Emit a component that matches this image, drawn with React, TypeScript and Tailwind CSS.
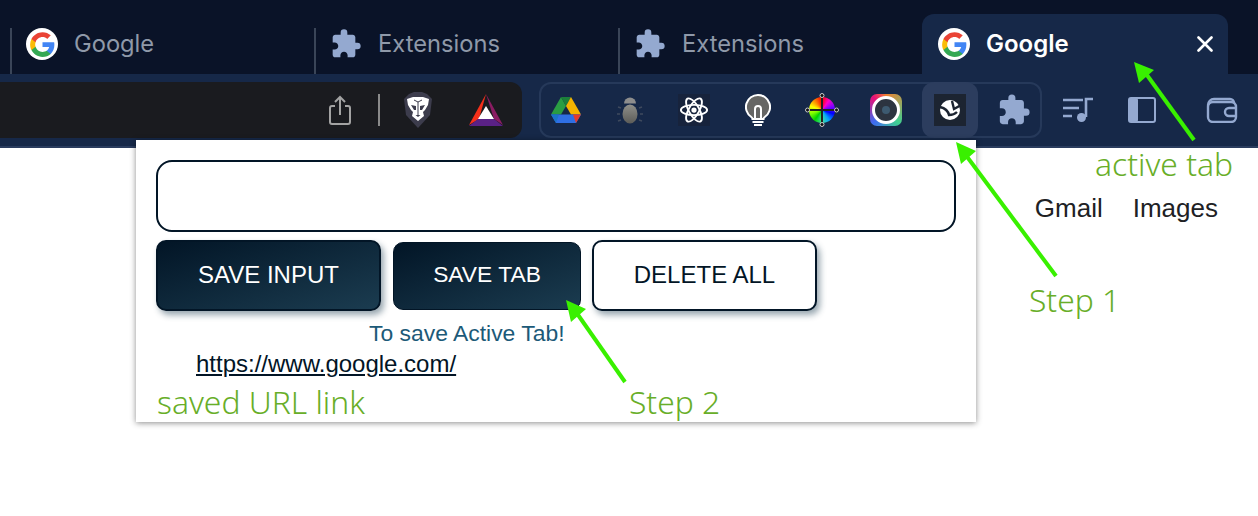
import { MdExtension } from 'react-icons/md';

function GoogleIcon() {
  return (
    <div className="flex h-8 w-8 items-center justify-center rounded-full bg-white">
      <svg viewBox="0 0 24 24" className="h-[27px] w-[27px]">
        <path fill="#4285F4" d="M22.56 12.25c0-.78-.07-1.53-.2-2.25H12v4.26h5.92c-.26 1.37-1.04 2.53-2.21 3.31v2.77h3.57c2.08-1.92 3.28-4.74 3.28-8.09z" />
        <path fill="#34A853" d="M12 23c2.97 0 5.46-.98 7.28-2.66l-3.57-2.77c-.98.66-2.23 1.06-3.71 1.06-2.86 0-5.29-1.93-6.16-4.53H2.18v2.84C3.99 20.53 7.7 23 12 23z" />
        <path fill="#FBBC05" d="M5.84 14.09c-.22-.66-.35-1.36-.35-2.09s.13-1.43.35-2.09V7.07H2.18C1.43 8.55 1 10.22 1 12s.43 3.45 1.18 4.93l3.66-2.84z" />
        <path fill="#EA4335" d="M12 5.38c1.62 0 3.06.56 4.21 1.64l3.15-3.15C17.45 2.09 14.97 1 12 1 7.7 1 3.99 3.47 2.18 7.07l3.66 2.84c.87-2.6 3.3-4.53 6.16-4.53z" />
      </svg>
    </div>
  );
}

function Puzzle() {
  return <MdExtension className="h-[34px] w-[34px] text-[#94a9d0]" />;
}

function InactiveTab({ title, icon }: { title: string; icon: React.ReactNode }) {
  return (
    <div className="flex h-[46px] w-[304px] items-center border-l-2 border-[#3a4558] pb-[14px] pl-[14px]">
      <div className="flex w-8 justify-center">{icon}</div>
      <span className="ml-[16px] text-[23.7px] text-[#8f99a9]">{title}</span>
    </div>
  );
}

function Slot({ children }: { children: React.ReactNode }) {
  return <div className="flex h-14 w-16 items-center justify-center">{children}</div>;
}

function Toolbar() {
  return (
    <div className="flex h-[74px] items-start border-b-[2px] border-[#2a3c5e] bg-[#162848] pt-2">
      <div className="flex h-14 w-[522px] items-center justify-end rounded-r-xl bg-[#1a1b1f]">
        <svg viewBox="0 0 24 32" className="h-8 w-6 text-[#a3a3a3]" fill="none" stroke="currentColor" strokeWidth="2">
          <path d="M7 12H4a2 2 0 0 0-2 2v14a2 2 0 0 0 2 2h16a2 2 0 0 0 2-2V14a2 2 0 0 0-2-2h-3" />
          <path d="M12 21V3M7 8l5-5 5 5" />
        </svg>
        <div className="ml-[26px] h-8 w-[2px] bg-[#8a8a8a]" />
        <svg viewBox="0 0 30 36" className="ml-[23px] h-9 w-[30px]">
          <path fill="#3c3c4c" d="M6 2l5-2h8l5 2 5 5-2 16-12 13L3 23 1 7z" />
          <path fill="#fff" d="M4 7l6-2h10l6 2-1 6-3 5-2 2 1 4-6 5-6-5 1-4-2-2-3-5z" />
          <path fill="#3c3c4c" d="M8 13l5 1 0 4-2 0zM22 13l-5 1 0 4 2 0zM12.5 23h5l-2.5 2z" />
          <path fill="none" stroke="#3c3c4c" strokeWidth="1" d="M15 10v13M11 8l4 2 4-2" />
        </svg>
        <svg viewBox="0 0 36 34" className="ml-[35px] mr-[18px] h-[34px] w-9">
          <path fill="#f5301a" d="M18 1L1 32l10-6z" />
          <path fill="#8a1c63" d="M18 1l17 31-9-6z" />
          <path fill="#5a2186" d="M1 33h34l-9-7H10z" />
          <path fill="#fff" d="M18 13l8 13H10z" />
        </svg>
      </div>
      <div className="ml-[17px] flex h-14 w-[503px] items-center rounded-xl border-2 border-[#26395a]">
        <div className="-ml-[7px] flex shrink-0 items-center">
          <Slot>
            <svg viewBox="0 0 30 26" className="h-[26px] w-[30px]">
              <path fill="#2a9d43" d="M10 0l5 9-5 8.5H0z" />
              <path fill="#1b7f3a" d="M10 0h10l-5 9z" />
              <path fill="#f4b400" d="M20 0l10 17.5H20L15 9z" />
              <path fill="#2f6fe4" d="M0 17.5h30L25 26H5z" />
              <path fill="#e53b2c" d="M30 17.5h-8l3 8.5z" />
              <path fill="#1a73c8" d="M0 17.5h8L5 26z" />
            </svg>
          </Slot>
          <Slot>
            <svg viewBox="0 0 28 27" className="h-[27px] w-7">
              <defs>
                <linearGradient id="bug" x1="0" y1="0" x2="0" y2="1">
                  <stop offset="0" stopColor="#8f8f8a" />
                  <stop offset="1" stopColor="#5c5c58" />
                </linearGradient>
              </defs>
              <path fill="#8d8d8d" d="M8 6.5a6 6 0 0 1 12 0z" />
              <ellipse cx="14" cy="17" rx="7.5" ry="9.5" fill="url(#bug)" />
              <path stroke="#3f4a5e" strokeWidth="1.5" fill="none" d="M5 11l-3-1M4 17H1M5 23l-3 1M23 11l3-1M24 17h3M23 23l3 1" />
            </svg>
          </Slot>
          <Slot>
            <div className="flex h-8 w-8 items-center justify-center bg-[#17233c]">
              <svg viewBox="-16 -16 32 32" className="h-[30px] w-[30px]" fill="none" stroke="#fff" strokeWidth="2">
                <ellipse rx="14" ry="5.5" />
                <ellipse rx="14" ry="5.5" transform="rotate(60)" />
                <ellipse rx="14" ry="5.5" transform="rotate(120)" />
                <circle r="2.8" fill="#fff" stroke="none" />
              </svg>
            </div>
          </Slot>
          <Slot>
            <svg viewBox="0 0 26 32" className="h-8 w-[26px]">
              <path fill="#666664" stroke="#fff" strokeWidth="2" d="M13 1a12 12 0 0 0-7 21.8c.8.6 1.5 1.2 1.5 2.2h11c0-1 .7-1.6 1.5-2.2A12 12 0 0 0 13 1z" />
              <path fill="none" stroke="#fff" strokeWidth="2" d="M10 24v-9a3 3 0 0 1 6 0v9" />
              <path fill="none" stroke="#fff" strokeWidth="2" d="M7 25h12M7.5 28h11M9 31h8" />
            </svg>
          </Slot>
          <Slot>
            <div className="relative h-[26px] w-[26px] rounded-full bg-[conic-gradient(#ff0000,#ff00c8,#8000ff,#0000ff,#00a0ff,#40e0a0,#00d000,#80ff00,#ffff00,#ff8000,#ff0000)]">
              <div className="absolute left-1/2 top-[-3px] h-8 w-[2px] -translate-x-1/2 bg-[#222]" />
              <div className="absolute left-[-3px] top-1/2 h-[2px] w-8 -translate-y-1/2 bg-[#222]" />
              <div className="absolute left-1/2 top-[-4px] h-[5px] w-[5px] -translate-x-1/2 rounded-full border border-[#ccc] bg-[#111]" />
              <div className="absolute bottom-[-4px] left-1/2 h-[5px] w-[5px] -translate-x-1/2 rounded-full border border-[#ccc] bg-[#111]" />
              <div className="absolute left-[-4px] top-1/2 h-[5px] w-[5px] -translate-y-1/2 rounded-full border border-[#ccc] bg-[#111]" />
              <div className="absolute right-[-4px] top-1/2 h-[5px] w-[5px] -translate-y-1/2 rounded-full border border-[#ccc] bg-[#111]" />
            </div>
          </Slot>
          <Slot>
            <div className="flex h-8 w-8 items-center justify-center rounded-[7px] bg-[conic-gradient(#f08030,#40d090_135deg,#3d6bf0_225deg,#e81078_315deg,#f08030)]">
              <div className="flex h-7 w-7 items-center justify-center rounded-full border-[3px] border-white bg-[#2c3440]">
                <div className="h-2 w-2 rounded-full bg-[#3d5a70]" />
              </div>
            </div>
          </Slot>
          <div className="mx-1 flex h-14 w-14 items-center justify-center rounded-xl bg-[#2c3d5e]">
            <div className="flex h-8 w-8 items-center justify-center bg-[#1c2431]">
              <svg viewBox="0 0 22 22" className="h-[22px] w-[22px]">
                <circle cx="11" cy="11" r="10" fill="#fff" />
                <path fill="none" stroke="#1c2431" strokeWidth="2.4" d="M22 6l-7 4-2-8M1 8c4 1 8 3 9 8 3 0 6-1 8-3" />
              </svg>
            </div>
          </div>
          <Slot><Puzzle /></Slot>
        </div>
      </div>
      <div className="ml-5 flex h-14 items-center">
        <svg viewBox="0 0 32 26" className="h-[26px] w-8" fill="none" stroke="#94a9d0" strokeWidth="2.6">
          <path d="M1 3h20M1 11h16M1 19h9" />
          <path d="M24 20V2h7" />
          <circle cx="19.5" cy="20.5" r="4.5" fill="#94a9d0" stroke="none" />
        </svg>
        <svg viewBox="0 0 28 26" className="ml-[34px] h-[26px] w-[28px]">
          <rect x="1" y="1" width="26" height="24" rx="2" fill="none" stroke="#94a9d0" strokeWidth="2" />
          <rect x="1" y="1" width="9" height="24" rx="2" fill="#94a9d0" />
        </svg>
        <svg viewBox="0 0 32 26" className="ml-[50px] h-[26px] w-8" fill="none" stroke="#94a9d0" strokeWidth="2.4">
          <path d="M2 8a6 6 0 0 1 6-6h16a4 4 0 0 1 4 4" />
          <rect x="2" y="5" width="28" height="20" rx="5" />
          <path d="M30 11h-7a4 4 0 0 0 0 8h7" />
        </svg>
      </div>
    </div>
  );
}

function Popup() {
  return (
    <div className="absolute left-[136px] top-[140px] h-[282px] w-[840px] bg-white p-5 shadow-[0_1px_6px_rgba(0,0,0,0.45)] [font-family:'Liberation_Sans',Arial,sans-serif]">
      <input className="block h-[72px] w-[800px] rounded-2xl border-2 border-[#021526] outline-none" />
      <div className="mt-2 flex items-center">
        <button className="h-[71px] w-[225px] rounded-[10px] border-2 border-[#021526] bg-[linear-gradient(to_bottom_right,#021526,#1b3c50)] pb-[2px] text-[24px] text-white shadow-[3px_4px_6px_rgba(27,60,80,0.45)]">
          SAVE INPUT
        </button>
        <button className="ml-3 h-[68px] w-[188px] rounded-[10px] border border-[#021526] bg-[linear-gradient(to_bottom_right,#021526,#1b3c50)] pb-[2px] text-[22.8px] text-white">
          SAVE TAB
        </button>
        <button className="ml-[11px] h-[71px] w-[225px] rounded-[10px] border-2 border-[#021526] bg-white pb-[2px] text-[24px] text-[#021526] shadow-[3px_4px_6px_rgba(27,60,80,0.45)]">
          DELETE ALL
        </button>
      </div>
      <div className="ml-[213px] mt-[9px] text-[22.9px] leading-[26px] text-[#1c5a78]">To save Active Tab!</div>
      <a className="ml-[40px] mt-1 block w-fit text-[24px] leading-[28px] text-[#021526] underline">https://www.google.com/</a>
    </div>
  );
}

export default function App() {
  return (
    <div className="relative h-[516px] w-[1258px] overflow-hidden bg-white [font-family:Inter,'Liberation_Sans',sans-serif]">
      <div className="flex h-[74px] items-end bg-[#0a1328] pl-[10px]">
        <div className="flex">
          <InactiveTab title="Google" icon={<GoogleIcon />} />
          <InactiveTab title="Extensions" icon={<Puzzle />} />
          <InactiveTab title="Extensions" icon={<Puzzle />} />
        </div>
        <div className="flex h-[60px] w-[306px] items-center rounded-t-xl bg-[#162848] pl-4 pr-[15px]">
          <GoogleIcon />
          <span className="ml-4 text-[24px] font-semibold text-white">Google</span>
          <svg viewBox="0 0 16 16" className="ml-auto h-4 w-4" stroke="#fff" strokeWidth="2.6" strokeLinecap="round">
            <path d="M1.5 1.5l13 13M14.5 1.5l-13 13" />
          </svg>
        </div>
      </div>
      <Toolbar />

      <div className="flex justify-end gap-[30px] pr-10 pt-[45px] text-[26px] leading-[30px] text-[#202124] [font-family:'Liberation_Sans',Arial,sans-serif]">
        <span>Gmail</span>
        <span>Images</span>
      </div>

      <Popup />

      {/* annotations drawn on top of the screenshot */}
      <svg className="pointer-events-none absolute inset-0" width="1258" height="516" stroke="#39f000" strokeWidth="4" fill="#39f000">
        <path d="M1194 140L1144 71" />
        <path d="M1134 62l20 8-15 13z" stroke="none" />
        <path d="M1056 276L965 154" />
        <path d="M956 142l20 9-15 13z" stroke="none" />
        <path d="M625 382L576 312" />
        <path d="M566 300l20 9-15 13z" stroke="none" />
      </svg>
      <div className="absolute left-[157px] top-[382px] text-[31.8px] font-light leading-[40px] text-[#68ae28] [font-family:'Noto_Sans',sans-serif]">saved URL link</div>
      <div className="absolute left-[629px] top-[382px] text-[31.8px] font-light leading-[40px] text-[#68ae28] [font-family:'Noto_Sans',sans-serif]">Step 2</div>
      <div className="absolute left-[1029px] top-[280px] text-[31.8px] font-light leading-[40px] text-[#68ae28] [font-family:'Noto_Sans',sans-serif]">Step 1</div>
      <div className="absolute left-[1095px] top-[144px] text-[31.8px] font-light leading-[40px] text-[#68ae28] [font-family:'Noto_Sans',sans-serif]">active tab</div>
    </div>
  );
}
